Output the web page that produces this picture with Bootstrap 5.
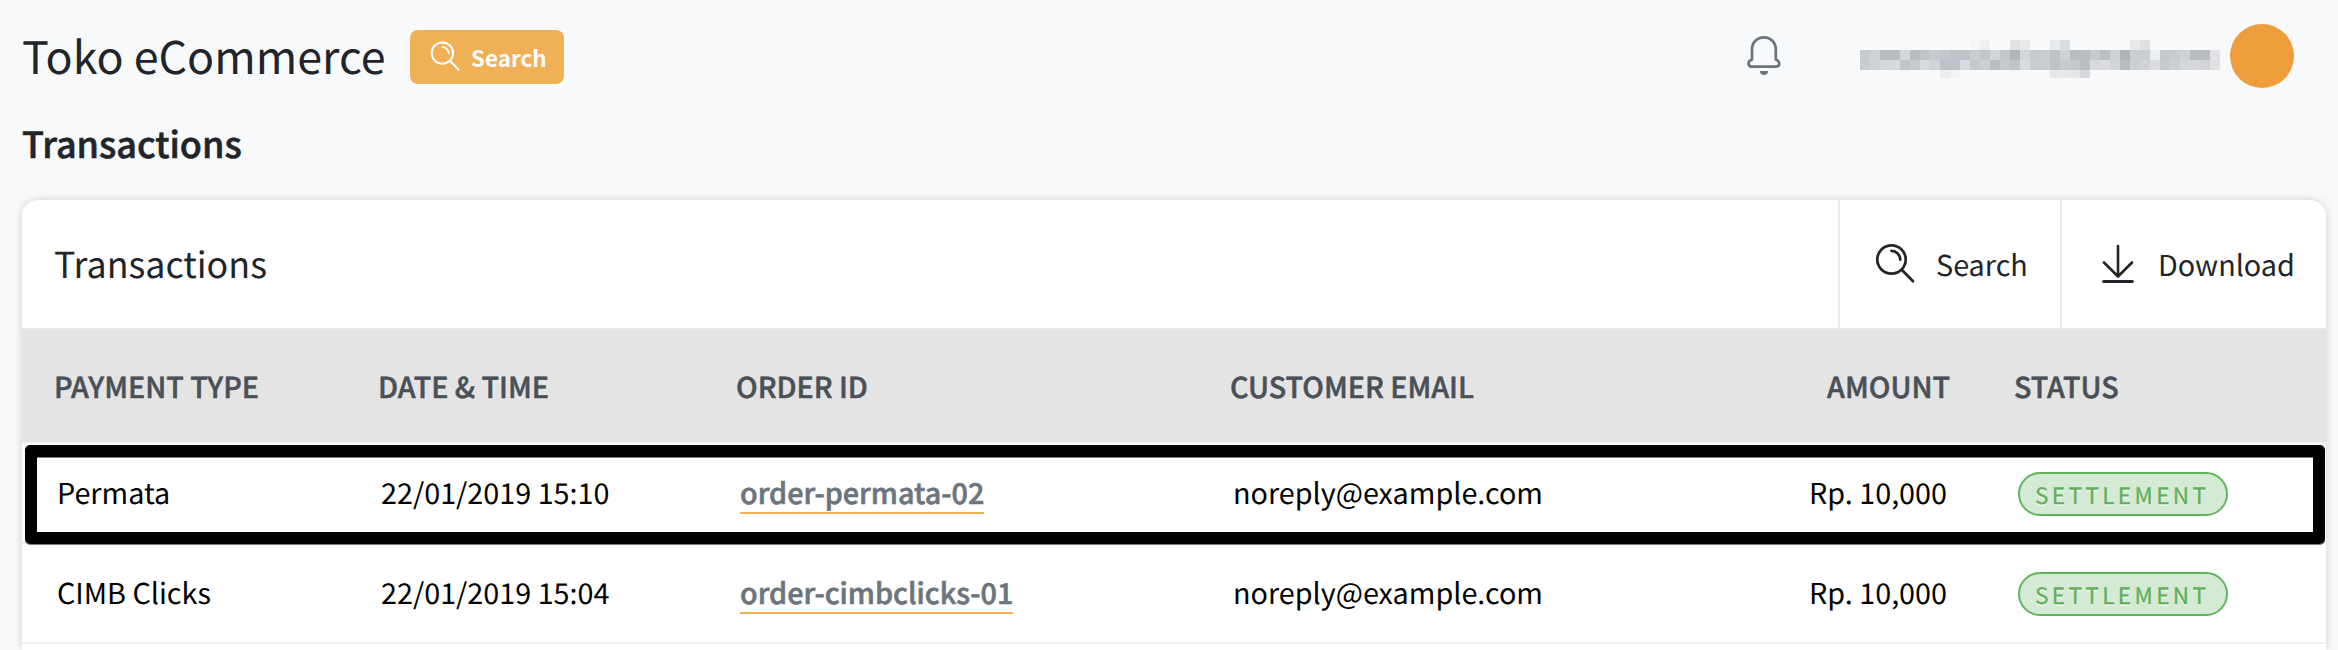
<!DOCTYPE html>
<html lang="en">
<head>
<meta charset="utf-8">
<title>Toko eCommerce - Transactions</title>
<link href="https://cdn.jsdelivr.net/npm/bootstrap@5.3.0/dist/css/bootstrap.min.css" rel="stylesheet">
<style>
  body { background: #f8f9fb; color: #212529; font-family: "Noto Sans CJK JP", "Noto Sans", sans-serif; font-size: 28.75px; text-rendering: geometricPrecision; overflow: hidden; height: 650px; }
  .topbar { height: 112px; padding: 0 44px 0 22px; }
  .store-name { width: 388px; font-size: 44.8px; line-height: 60px; margin: -3px 0 0; font-weight: 400; white-space: nowrap; }
  .btn-find { width: 154px; height: 54px; margin-top: 2px; padding: 0 0 0 20px; background: #f0b056; border: 0; border-radius: 8px; color: #fff; font-size: 22.4px; font-weight: 700; line-height: 54px; }
  .btn-find svg { margin-right: 10px; }
  .btn-find span { margin-top: -1px; }
  .bell { margin-right: 76px; }
  .masked { margin-top: 6px; }
  .avatar { width: 64px; height: 64px; margin-left: 10px; background: #ed9d3b; }
  .page-title { font-size: 36px; line-height: 60px; font-weight: 500; -webkit-text-stroke: .6px #212529; margin: 0 0 27px; padding: 1px 0 0 22px; }
  .panel { margin: 0 12px 0 22px; height: 450px; background: #fff; border: 0; border-radius: 16px 16px 0 0; box-shadow: 0 0 8px rgba(0,0,0,.17); overflow: hidden; }
  .panel-wrap { position: relative; }
  .panel-head { height: 130px; border-bottom: 2px solid #e9ecef; padding-left: 32px; }
  .panel-head h2 { font-size: 35.8px; line-height: 60px; font-weight: 400; margin: -3px 0 0; }
  .tool { border-left: 2px solid #e9ecef; white-space: nowrap; line-height: 40px; }
  .tool span { margin-top: 2px; }
  .tool-search { width: 222px; padding-left: 34px; }
  .tool-download { width: 266px; padding-left: 39px; }
  .txn { table-layout: fixed; border-collapse: separate; border-spacing: 0; margin: 0; line-height: 42px; white-space: nowrap; --bs-table-bg: transparent; }
  .txn > :not(caption) > * > * { border: 0; box-shadow: none; vertical-align: top; }
  .txn > thead > tr > th { height: 112px; background: #e4e4e4; color: #495057; font-size: 28.7px; font-weight: 500; -webkit-text-stroke: .5px #495057; padding: 36px 32px 0; }
  .txn > tbody > tr > td { height: 100px; border-top: 2px solid #f1f1f1; padding: 28px 35px 0; color: #000; }
  .txn > tbody > tr > td.order { padding-left: 36px; }
  .txn > tbody > tr > td.state { padding: 28px 0 0 36px; line-height: 0; }
  .txn > tbody > tr.rest > td { height: 8px; padding: 0; line-height: 0; }
  .order a { display: inline-block; height: 42px; vertical-align: top; color: #6c757d; font-weight: 500; -webkit-text-stroke: .6px #6c757d; text-decoration: none; border-bottom: 2px solid #f0b056; }
  .pill { display: inline-block; width: 210px; height: 44px; padding-left: 15px; border: 2px solid #5fb55b; border-radius: 22px; background: #d5ead5; color: #5fb05a; font-size: 22.5px; line-height: 42px; letter-spacing: 3.4px; -webkit-text-stroke: .3px #5fb05a; text-shadow: 0 2px 0 rgba(255,255,255,.55); }
  .focus-row { position: absolute; left: 25px; right: 13px; top: 245px; height: 99px; border: 12px solid #000; border-radius: 5px; box-shadow: inset 0 1px 0 #7f7f7f, 0 1px 0 #7f7f7f; }
</style>
</head>
<body>
<header class="topbar d-flex align-items-center">
  <h1 class="store-name">Toko eCommerce</h1>
  <button class="btn btn-find d-flex align-items-center" type="button">
    <svg width="31" height="32" viewBox="0 0 31 32" fill="none" stroke="#fff" stroke-width="2" stroke-linecap="round"><circle cx="12.4" cy="12.1" r="10.7"/><path d="M12.6 5.900a7 7 0 0 1 6.200 6.400M20.400 20.300l8.200 8.400"/></svg>
    <span>Search</span>
  </button>
  <div class="ms-auto d-flex align-items-center">
    <svg class="bell" width="40" height="42" viewBox="0 0 40 42" fill="none" stroke="#6c757d" stroke-width="2.7" stroke-linejoin="round"><path d="M8 24.5V14.5C8 7.500 13 2.300 19.900 2.300S31.800 7.500 31.800 14.500V24.500C33.800 25.400 35.300 26.700 35.300 28.600C35.300 30.500 33.900 31.700 31.800 31.700H8C5.900 31.700 4.500 30.500 4.500 28.600C4.500 26.700 6 25.400 8 24.500Z"/><path d="M16 36H24A4 4 0 0 1 16 36Z" fill="#6c757d" stroke="none"/></svg>
    <svg id="account" class="masked" width="360" height="38" shape-rendering="crispEdges" role="img" aria-label="Account"></svg>
    <span class="avatar rounded-circle"></span>
  </div>
</header>

<h2 class="page-title">Transactions</h2>

<div class="panel-wrap">
  <section class="card panel">
    <div class="panel-head d-flex flex-shrink-0">
      <h2 class="me-auto align-self-center">Transactions</h2>
      <div class="tool tool-search d-flex align-items-center">
        <svg width="62" height="44" viewBox="0 0 62 44" fill="none" stroke="#212529" stroke-width="2.700" stroke-linecap="round"><circle cx="17.500" cy="17.500" r="14.200"/><path d="M17.500 8.800a8.800 8.800 0 0 1 8.700 8.900M28 28l11 11.300"/></svg>
        <span>Search</span>
      </div>
      <div class="tool tool-download d-flex align-items-center">
        <svg width="57" height="44" viewBox="0 0 57 44" fill="none" stroke="#212529" stroke-width="3" stroke-linecap="round" stroke-linejoin="round"><path d="M17 4V34.500M3 20.500L17 34.500L31 20.500" stroke-width="2.600"/><path d="M2.700 39.500H31.300"/></svg>
        <span>Download</span>
      </div>
    </div>
    <table class="table txn">
      <colgroup><col style="width:324px"><col style="width:358px"><col style="width:494px"><col style="width:502px"><col style="width:282px"><col style="width:344px"></colgroup>
      <thead>
        <tr><th>PAYMENT TYPE</th><th>DATE &amp; TIME</th><th>ORDER ID</th><th>CUSTOMER EMAIL</th><th class="text-end">AMOUNT</th><th>STATUS</th></tr>
      </thead>
      <tbody>
        <tr><td>Permata</td><td>22/01/2019 15:10</td><td class="order"><a href="#">order-permata-02</a></td><td>noreply@example.com</td><td class="text-end">Rp. 10,000</td><td class="state"><span class="pill">SETTLEMENT</span></td></tr>
        <tr><td>CIMB Clicks</td><td>22/01/2019 15:04</td><td class="order"><a href="#">order-cimbclicks-01</a></td><td>noreply@example.com</td><td class="text-end">Rp. 10,000</td><td class="state"><span class="pill">SETTLEMENT</span></td></tr>
        <tr class="rest"><td colspan="6"></td></tr>
      </tbody>
    </table>
  </section>
  <div class="focus-row"></div>
</div>

<script src="https://cdn.jsdelivr.net/npm/bootstrap@5.3.0/dist/js/bootstrap.bundle.min.js"></script>
<script>
  // Masked account address: rows of 10px blocks, each row as [first column, colours]
  const blocks = [
    [0, 10, [[11,'f4f5f7 eff0f2'],[15,'e0e2e4 e7e9eb'],[19,'e7e9eb dadee1'],[27,'e7e9eb dfe1e3']]],
    [10, 10, [[0,'c7cbce cfd3d6 b9bcc0 b9bcc0 d3d7da b9bcc3 c1c4cb c8cad1 c4c6ce bfc2c9 bfc2c9 c8ccce c2c6ca d1d5d8 c3c6ca b1b5bc d3d6da c6cacc cacdd0 c0c4c7 cfd3d6 b9bdc1 babdc4 c6c9cf bcbfc6 cfd2d5 afb3ba cbcfd1 cbcfd1 edeef0 c5c9cc c8cbcf cfd2d5 b9bcc0 b9bcc0 e1e2e4']]],
    [20, 10, [[0,'cacdd0 d0d3d6 d5d7d9 d8d9db c1c4c8 c6c9cd d7dadd d1d3d6 bec1c8 bec1c8 d8dcdf c6c9cc ccced2 bbbec3 c7c9ce c0c3c8 d9dadd cacdd0 cacdd0 bfc3c7 c6c9cd c5c8cc bbbec3 d9dadd dcdcdf d1d3d6 b8bbc1 ccd0d2 d1d3d6 dcddde c7cbce cdd0d3 d5d7da d6d8da d1d3d7 e0e1e3']]],
    [30, 8, [[8,'ecedef f3f4f6'],[19,'e6e8e9 e6e8e9 e4e5e7 d6d8dc']]]
  ];
  document.getElementById('account').innerHTML = blocks.map(([y, h, runs]) =>
    runs.map(([start, list]) => list.split(' ').map((c, i) =>
      `<rect x="${(start + i) * 10}" y="${y}" width="10" height="${h}" fill="#${c}"/>`).join('')).join('')).join('');
</script>
</body>
</html>
